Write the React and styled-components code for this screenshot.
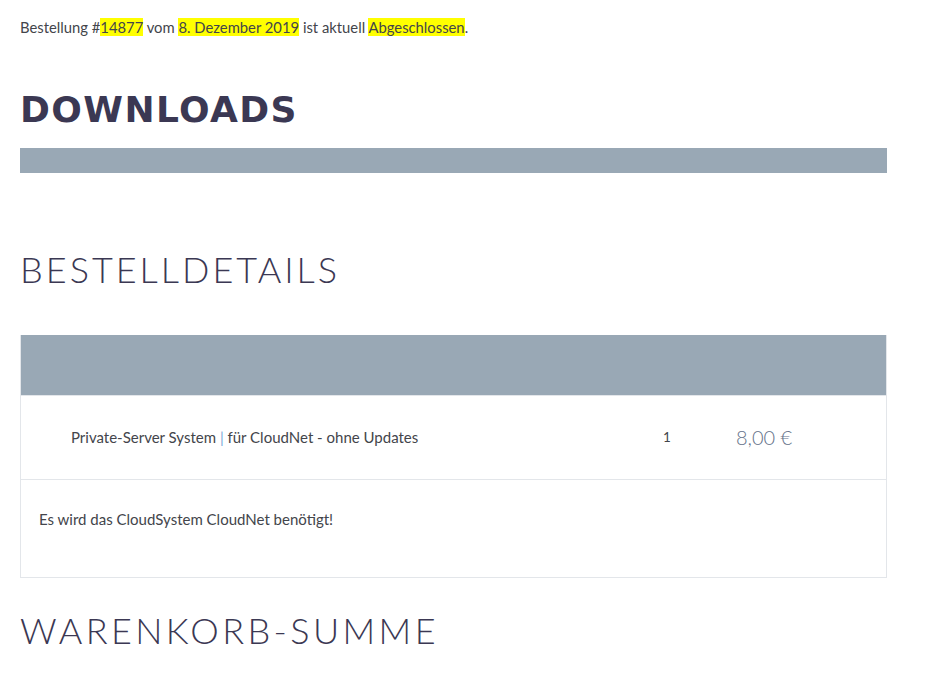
import React from "react";
import styled, { createGlobalStyle } from "styled-components";

const GlobalStyle = createGlobalStyle`
  body {
    margin: 0;
    background: #ffffff;
    font-family: Lato, "Open Sans", sans-serif;
    color: #43454b;
  }
`;

const Page = styled.div`
  width: 867px;
  padding: 17px 20px 40px 20px;
`;

const Notice = styled.p`
  margin: 0;
  font-size: 14.8px;
  line-height: 20px;
  color: #43454b;
`;

const Mark = styled.mark`
  background: #ffff00;
  color: #43454b;
`;

const BoldTitle = styled.h2`
  margin: 51px 0 0 0;
  font-family: "DejaVu Sans", sans-serif;
  font-weight: 700;
  font-size: 36px;
  line-height: 44px;
  letter-spacing: 1.4px;
  color: #3b3853;
`;

const Bar = styled.div`
  margin-top: 16px;
  height: 25px;
  background: #99a8b5;
`;

const ThinTitle = styled.h2`
  margin: ${(p) => p.top}px 0 0 0;
  font-family: Lato, sans-serif;
  font-weight: 300;
  font-size: 36px;
  line-height: 44px;
  letter-spacing: ${(p) => p.spacing}px;
  color: #3b3853;
`;

const Table = styled.table`
  margin-top: 44px;
  width: 867px;
  border-collapse: collapse;
  border: 1px solid #e3e6ea;
  border-top: none;
`;

const HeadRow = styled.tr`
  height: 60px;
  background: #99a8b5;
`;

const Row = styled.tr`
  height: ${(p) => p.h}px;
  border-top: 1px solid #e3e6ea;
`;

const Cell = styled.td`
  padding: 0;
  vertical-align: middle;
  font-size: 15px;
  color: #43454b;
`;

const NameCell = styled(Cell)`
  padding-left: 50px;
  width: 592px;
`;

const QtyCell = styled(Cell)`
  width: 73px;
  font-size: 13.5px;
`;

const PriceCell = styled(Cell)`
  font-size: 20px;
  font-weight: 300;
  color: #66738a;
`;

const NoteCell = styled(Cell)`
  padding: 0 0 18px 18px;
`;

const Sep = styled.span`
  color: #7aa6d6;
`;

export default function App() {
  return (
    <>
      <GlobalStyle />
      <Page>
        <Notice>
          Bestellung #<Mark>14877</Mark> vom <Mark>8. Dezember 2019</Mark> ist
          aktuell <Mark>Abgeschlossen</Mark>.
        </Notice>
        <BoldTitle>DOWNLOADS</BoldTitle>
        <Bar />
        <ThinTitle top={74} spacing={3}>BESTELLDETAILS</ThinTitle>
        <Table>
          <tbody>
            <HeadRow>
              <td colSpan={3} />
            </HeadRow>
            <Row h={84}>
              <NameCell>
                Private-Server System <Sep>|</Sep> für CloudNet - ohne Updates
              </NameCell>
              <QtyCell>1</QtyCell>
              <PriceCell>8,00 €</PriceCell>
            </Row>
            <Row h={98}>
              <NoteCell colSpan={3}>Es wird das CloudSystem CloudNet benötigt!</NoteCell>
            </Row>
          </tbody>
        </Table>
        <ThinTitle top={30} spacing={3.4}>WARENKORB-SUMME</ThinTitle>
      </Page>
    </>
  );
}
